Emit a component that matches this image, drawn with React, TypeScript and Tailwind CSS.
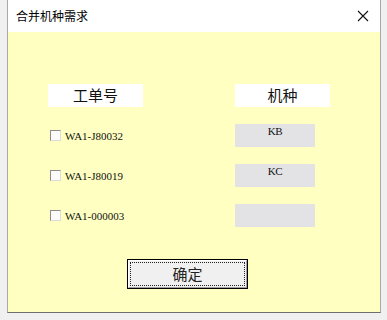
import React from 'react';

const rows = [
  { id: 'WA1-J80032', kind: 'KB' },
  { id: 'WA1-J80019', kind: 'KC' },
  { id: 'WA1-000003', kind: '' },
];

const cjk = { fontFamily: '"Noto Sans CJK SC", "Noto Sans", sans-serif' };
const serif = { fontFamily: '"Liberation Serif", "Noto Sans CJK SC", serif' };

export default function App() {
  return (
    <div className="w-[387px] h-[320px] bg-[#f0f0f0] overflow-hidden">
      <div className="ml-[7px] w-[374px] border-l border-r border-b border-l-[#a8a8a8] border-r-[#a8a8a8] border-b-[#6e6e6e] bg-white">
        {/* title bar */}
        <div className="h-[32px] flex items-center justify-between pl-[8px] pr-[10px] bg-white">
          <span className="text-[12px] text-black" style={cjk}>合并机种需求</span>
          <svg width="12" height="12" viewBox="0 0 12 12" className="mr-[1px]">
            <path d="M1 1 L11 11 M11 1 L1 11" stroke="#111" strokeWidth="1.1" />
          </svg>
        </div>

        {/* body */}
        <div className="h-[280px] bg-[#ffffc2] pt-[52px] pl-[40px]">
          <div className="flex flex-col gap-[17px]">
            <div className="flex h-[23px]">
              <div className="w-[187px]">
                <div className="w-[95px] h-[23px] bg-white flex items-center justify-center text-[15px] text-[#111]" style={cjk}>
                  工单号
                </div>
              </div>
              <div className="w-[95px] h-[23px] bg-white flex items-center justify-center text-[15px] text-[#111]" style={cjk}>
                机种
              </div>
            </div>

            {rows.map(r => (
              <div key={r.id} className="flex h-[23px]">
                <div className="w-[187px] flex items-center pl-[2px] gap-[4px]">
                  <div className="w-[11px] h-[11px] bg-[#fbfbfb] border border-t-[#8c8c8c] border-l-[#8c8c8c] border-b-[#dcdcdc] border-r-[#dcdcdc]" />
                  <span className="text-[11px] leading-[12px] text-[#111]" style={serif}>{r.id}</span>
                </div>
                <div className="w-[80px] h-[23px] bg-[#e3e3e6] flex justify-center pt-[2px]">
                  <span className="text-[11px] leading-[11px] tracking-[-0.5px] text-[#111]" style={serif}>{r.kind}</span>
                </div>
              </div>
            ))}
          </div>

          <div className="mt-[32px] ml-[79px] w-[121px] h-[30px] border border-black bg-[#f0f0f0]">
            <div className="w-full h-full border border-t-white border-l-white border-b-[#a0a0a0] border-r-[#a0a0a0] p-[1px]">
              <div className="w-full h-full border border-dotted border-[#222] flex items-center justify-center text-[15px] text-[#222]" style={cjk}>
                确定
              </div>
            </div>
          </div>
        </div>
      </div>
    </div>
  );
}
